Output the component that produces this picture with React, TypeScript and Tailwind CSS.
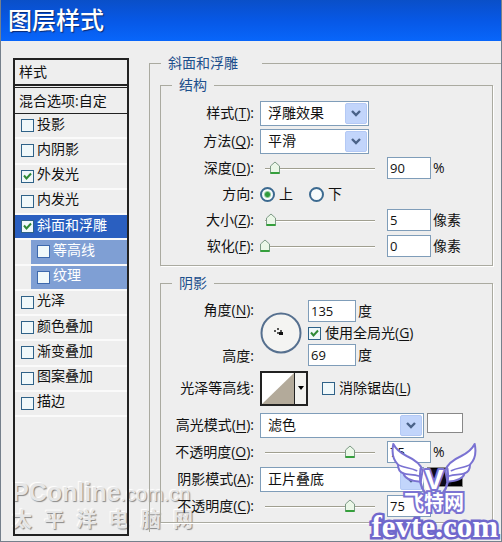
import { useState } from "react";
import type { ReactNode } from "react";
import clsx from "clsx";

type Effect = { id: string; label: string; checked?: boolean; sub?: boolean };

const EFFECTS: Effect[] = [
  { id: "drop-shadow", label: "投影" },
  { id: "inner-shadow", label: "内阴影" },
  { id: "outer-glow", label: "外发光", checked: true },
  { id: "inner-glow", label: "内发光" },
  { id: "bevel", label: "斜面和浮雕", checked: true },
  { id: "contour", label: "等高线", sub: true },
  { id: "texture", label: "纹理", sub: true },
  { id: "satin", label: "光泽" },
  { id: "color-overlay", label: "颜色叠加" },
  { id: "gradient-overlay", label: "渐变叠加" },
  { id: "pattern-overlay", label: "图案叠加" },
  { id: "stroke", label: "描边" },
];

const BLEND_MODES = ["滤色", "正片叠底", "正常"];

function CheckBox({ id, checked, className }: { id: string; checked?: boolean; className?: string }) {
  return (
    <span className="relative flex shrink-0">
      <input
        id={id}
        type="checkbox"
        defaultChecked={checked}
        className={clsx("peer size-[13px] appearance-none border border-[#2f6288] bg-[#f0f8fa]", className)}
      />
      <svg
        viewBox="0 0 13 13"
        className="pointer-events-none absolute inset-0 hidden size-full peer-checked:block"
        fill="none"
        stroke="#2f8a35"
        strokeWidth="2"
      >
        <path d="M3 5.5 5.5 8.5 10 3.5" />
      </svg>
    </span>
  );
}

function EffectRow({ effect, selected, onSelect }: { effect: Effect; selected: boolean; onSelect: () => void }) {
  return (
    <li className={clsx("flex flex-1 border-b-2 border-[#fafafa]", effect.sub && "pl-4")} onClick={onSelect}>
      <div
        className={clsx(
          "flex flex-1 items-center gap-[3px] pl-1.5",
          selected && "bg-[#2a5fc0] text-white",
          effect.sub && "bg-[#7f9fd4] text-white"
        )}
      >
        <CheckBox id={effect.id} checked={effect.checked} className={effect.sub ? "border-[#3d69ad]" : undefined} />
        <label htmlFor={effect.id} className="whitespace-nowrap pb-1 leading-4">
          {effect.label}
        </label>
      </div>
    </li>
  );
}

function Caption({ text, hotkey, htmlFor }: { text: string; hotkey?: string; htmlFor?: string }) {
  return (
    <label htmlFor={htmlFor} className="w-[93px] shrink-0 whitespace-nowrap text-right">
      {text}
      {hotkey && (
        <>
          (<u className="underline-offset-2">{hotkey}</u>)
        </>
      )}
      :
    </label>
  );
}

function Dropdown({ id, value, options, wide }: { id: string; value: string; options: string[]; wide?: boolean }) {
  return (
    <div className={clsx("relative h-[25px]", wide ? "w-[164px]" : "w-[109px]")}>
      <select
        id={id}
        defaultValue={value}
        className="size-full appearance-none border border-[#7f9db9] bg-white pl-[7px] pr-6 outline-none"
      >
        {options.map((o) => (
          <option key={o}>{o}</option>
        ))}
      </select>
      <span className="pointer-events-none absolute inset-y-[2px] right-[2px] flex w-[22px] items-center justify-center rounded-xs border border-[#b4c9f5] bg-[#c2d5fb]">
        <svg viewBox="0 0 10 7" className="h-[7px] w-2.5" fill="none" stroke="#4a6288" strokeWidth="2.4">
          <path d="M1 1 5 5 9 1" />
        </svg>
      </span>
    </div>
  );
}

function NumberBox({ label, value, wide }: { label: string; value: string; wide?: boolean }) {
  return (
    <input
      type="text"
      aria-label={label}
      defaultValue={value}
      className={clsx(
        "h-[22px] border border-[#7f9db9] bg-white pl-0.5 text-[13px] outline-none",
        wide ? "w-12" : "w-11"
      )}
    />
  );
}

function Slider({ id, initial }: { id: string; initial: number }) {
  const [value, setValue] = useState(initial);
  return (
    <div className="relative ml-[5px] mr-3 flex h-5 w-[110px] items-center">
      <span className="h-px w-full bg-[#a09f90] shadow-[0_1px_0_#fff]" />
      <svg
        viewBox="0 0 12 14"
        className="absolute h-3.5 w-3 -translate-x-1/2"
        style={{ left: `${value}%` }}
        stroke="#7d9a86"
        fill="#ebf7e8"
      >
        <path d="M1.5 12.5V5L6 1l4.5 4v7.5z" />
        <path d="M1.5 12h9" stroke="#35a03c" strokeWidth="2" />
      </svg>
      <input
        id={id}
        type="range"
        value={value}
        onChange={(e) => setValue(Number(e.target.value))}
        className="absolute inset-0 size-full opacity-0"
      />
    </div>
  );
}

function SliderRow(props: {
  id: string;
  text: string;
  hotkey: string;
  position: number;
  value: string;
  unit?: string;
  className: string;
}) {
  return (
    <div className={clsx("flex items-center", props.className)}>
      <Caption text={props.text} hotkey={props.hotkey} htmlFor={props.id} />
      <div className="ml-1.5 flex items-center">
        <Slider id={props.id} initial={props.position} />
        <NumberBox label={props.text} value={props.value} />
        {props.unit && <span className="ml-0.5">{props.unit}</span>}
      </div>
    </div>
  );
}

function Group({ title, className, children }: { title: string; className?: string; children: ReactNode }) {
  return (
    <fieldset className={clsx("min-w-0 border border-[#aaaaa0] shadow-[1px_1px_0_#fff]", className)}>
      <legend className="ml-[11px] w-[42px] pl-[7px] text-[#1c4f8c]">{title}</legend>
      {children}
    </fieldset>
  );
}

function WingLogo() {
  return (
    <svg viewBox="12 9 264 168" className="h-14 w-[88px]" strokeLinejoin="round" strokeLinecap="round">
      <defs>
        <g id="wing" fill="#fff" stroke="#7a72d2" strokeWidth="6">
          <path d="M22 18C16 46 24 68 36 80C36 94 44 103 52 106C56 120 72 130 104 131L110 98C104 76 84 64 62 54C42 44 30 34 22 18Z" />
          <path d="M36 80C52 90 72 88 92 98M52 106C66 112 82 108 98 114" fill="none" strokeWidth="5" />
        </g>
      </defs>
      <path d="M132 94H184L196 142H132Z" fill="#0c0a1e" />
      <use href="#wing" />
      <use href="#wing" transform="translate(288 0) scale(-1 1)" />
      <path d="M104 92Q96 140 118 166H170Q192 140 184 92" fill="none" stroke="#7a72d2" strokeWidth="7" />
      <path d="M112 92Q106 136 126 164L140 150L114 92Z" fill="#fff" />
      <text
        x="144"
        y="152"
        textAnchor="middle"
        fontSize="84"
        fontWeight="700"
        fontFamily="Liberation Sans, sans-serif"
        fill="#fff"
        stroke="#7a72d2"
        strokeWidth="12"
        paintOrder="stroke"
      >
        V
      </text>
    </svg>
  );
}

function PortalMark() {
  return (
    <div className="pointer-events-none absolute bottom-[9px] left-[11px] w-[181px] text-[#e6e6e6] [text-shadow:1px_1px_1px_#888,-1px_-1px_1px_#fff]">
      <div className="flex items-baseline whitespace-nowrap font-['Liberation_Sans',sans-serif] font-bold">
        <span className="text-[25px] leading-7">PConline</span>
        <span className="text-xl font-normal leading-7">.com.cn</span>
      </div>
      <div className="flex justify-between text-xl font-bold leading-6">
        {Array.from("太平洋电脑网").map((c) => (
          <span key={c}>{c}</span>
        ))}
      </div>
    </div>
  );
}

function SiteMark() {
  return (
    <div className="pointer-events-none absolute bottom-0 right-[3px] flex flex-col items-end text-white">
      <div className="-mb-1 mr-5">
        <WingLogo />
      </div>
      <div className="mr-[34px] text-xl font-bold leading-5 [-webkit-text-stroke:4px_#7a72d2] [paint-order:stroke_fill]">
        飞特网
      </div>
      <div className="font-['Liberation_Serif',serif] text-[31px] font-bold leading-7 [-webkit-text-stroke:5px_#7068cc] [paint-order:stroke_fill]">
        fevte.com
      </div>
    </div>
  );
}

export default function App() {
  const [active, setActive] = useState("bevel");

  return (
    <div className="relative flex min-h-screen flex-col overflow-hidden border-x border-b border-[#75808c] bg-[#eeeeee] font-['Open_Sans','Noto_Sans_CJK_SC',sans-serif] text-sm leading-5 text-[#111]">
      <PortalMark />

      <header className="flex h-[41px] items-center bg-linear-to-b from-[#0a4fc8] via-[#0758e6] to-[#0866fb] pb-0.5 pl-[7px]">
        <h1 className="text-2xl font-medium text-white [text-shadow:1px_1px_1px_#0a2a70]">图层样式</h1>
      </header>

      <div className="relative flex flex-1 pb-[5px] pl-3">
        {/* Effect list */}
        <nav className="mt-[17px] flex w-[116px] shrink-0 flex-col border-2 border-[#222]">
          <div className="flex h-[26px] items-center border-b-2 border-[#222] pl-1">样式</div>
          <div className="mt-px flex h-[27px] items-center whitespace-nowrap border-y border-[#222] pl-1">
            混合选项:自定
          </div>
          <ul className="flex h-[303px] flex-col">
            {EFFECTS.map((e) => (
              <EffectRow key={e.id} effect={e} selected={active === e.id} onSelect={() => setActive(e.id)} />
            ))}
          </ul>
        </nav>

        {/* Settings of the selected effect */}
        <fieldset className="ml-5 mt-3 mb-1 min-w-0 flex-1 border-l border-t border-[#aaaaa0] pl-2.5 pr-2">
          <legend className="ml-[1px] w-[101px] pl-[7px] text-[#1c4f8c]">斜面和浮雕</legend>

          <Group title="结构" className="mt-0.5 pb-1.5 pt-1">
            <div className="flex h-7 items-center gap-1.5">
              <Caption text="样式" hotkey="T" htmlFor="style" />
              <Dropdown id="style" value="浮雕效果" options={["外斜面", "内斜面", "浮雕效果", "枕状浮雕"]} />
            </div>
            <div className="flex h-7 items-center gap-1.5">
              <Caption text="方法" hotkey="Q" htmlFor="technique" />
              <Dropdown id="technique" value="平滑" options={["平滑", "雕刻清晰", "雕刻柔和"]} />
            </div>
            <SliderRow id="depth" text="深度" hotkey="D" position={9} value="90" unit="%" className="h-[26px]" />
            <div className="flex h-[26px] items-center gap-1.5">
              <Caption text="方向" />
              <div className="flex gap-4">
                {["上", "下"].map((d, i) => (
                  <label key={d} className="flex items-center gap-1">
                    <input
                      type="radio"
                      name="direction"
                      defaultChecked={i === 0}
                      className="size-[15px] appearance-none rounded-full border-2 border-[#3c6a90] bg-[#f6fbfc] checked:bg-[radial-gradient(circle,#2f9a3c_2px,#f6fbfc_4px)]"
                    />
                    {d}
                  </label>
                ))}
              </div>
            </div>
            <SliderRow id="size" text="大小" hotkey="Z" position={5} value="5" unit="像素" className="h-[26px]" />
            <SliderRow id="soften" text="软化" hotkey="F" position={0} value="0" unit="像素" className="h-[26px]" />
          </Group>

          <Group title="阴影" className="mt-[7px] pb-1 pt-[7px]">
            <div className="flex h-[66px] items-center gap-1.5">
              <div className="flex h-full flex-col justify-between">
                <Caption text="角度" hotkey="N" />
                <Caption text="高度" />
              </div>
              <svg viewBox="0 0 42 42" className="size-[42px]">
                <circle cx="21" cy="21" r="19.5" fill="#f4f4f2" stroke="#56708f" strokeWidth="2" />
                <path d="M14 19h2M18 16v2M18 20v2M20 19h2" stroke="#222" strokeWidth="1.5" />
                <path d="M19 20h4v3h-4z" fill="#111" />
              </svg>
              <div className="flex flex-col">
                <div className="flex h-[22px] items-center gap-0.5">
                  <NumberBox label="角度" value="135" wide />度
                </div>
                <div className="flex h-[22px] items-center gap-1 whitespace-nowrap">
                  <CheckBox id="global-light" checked />
                  <label htmlFor="global-light">
                    使用全局光(<u className="underline-offset-2">G</u>)
                  </label>
                </div>
                <div className="flex h-[22px] items-center gap-0.5">
                  <NumberBox label="高度" value="69" wide />度
                </div>
              </div>
            </div>

            <div className="flex h-11 items-center gap-1.5">
              <Caption text="光泽等高线" />
              <button type="button" aria-label="光泽等高线" className="flex h-[35px] w-12 border-2 border-[#222] bg-white">
                <svg viewBox="0 0 32 31" preserveAspectRatio="none" className="h-full w-8">
                  <path d="M0 31 32 0V31z" fill="#b3aa9a" />
                </svg>
                <span className="flex h-full flex-1 items-center justify-center border-l border-[#222] bg-[#f2f2f0]">
                  <svg viewBox="0 0 6 4" className="h-1 w-1.5">
                    <path d="M0 0h6L3 4z" />
                  </svg>
                </span>
              </button>
              <span className="ml-2 flex items-center gap-1 whitespace-nowrap">
                <CheckBox id="anti-alias" />
                <label htmlFor="anti-alias">
                  消除锯齿(<u className="underline-offset-2">L</u>)
                </label>
              </span>
            </div>

            <div className="flex h-[30px] items-center gap-1.5">
              <Caption text="高光模式" hotkey="H" htmlFor="highlight" />
              <div className="flex items-start gap-[3px]">
                <Dropdown id="highlight" value="滤色" options={BLEND_MODES} wide />
                <button type="button" aria-label="高光颜色" className="h-5 w-9 border border-[#888] bg-white" />
              </div>
            </div>
            <SliderRow id="highlight-opacity" text="不透明度" hotkey="O" position={77} value="75" unit="%" className="h-6" />
            <div className="flex h-[30px] items-center gap-1.5">
              <Caption text="阴影模式" hotkey="A" htmlFor="shadow" />
              <div className="flex items-start gap-[3px]">
                <Dropdown id="shadow" value="正片叠底" options={BLEND_MODES} wide />
                <button type="button" aria-label="阴影颜色" className="h-5 w-9 border border-[#888] bg-black" />
              </div>
            </div>
            <SliderRow id="shadow-opacity" text="不透明度" hotkey="C" position={77} value="75" className="h-6" />
          </Group>
        </fieldset>
      </div>

      <SiteMark />
    </div>
  );
}
